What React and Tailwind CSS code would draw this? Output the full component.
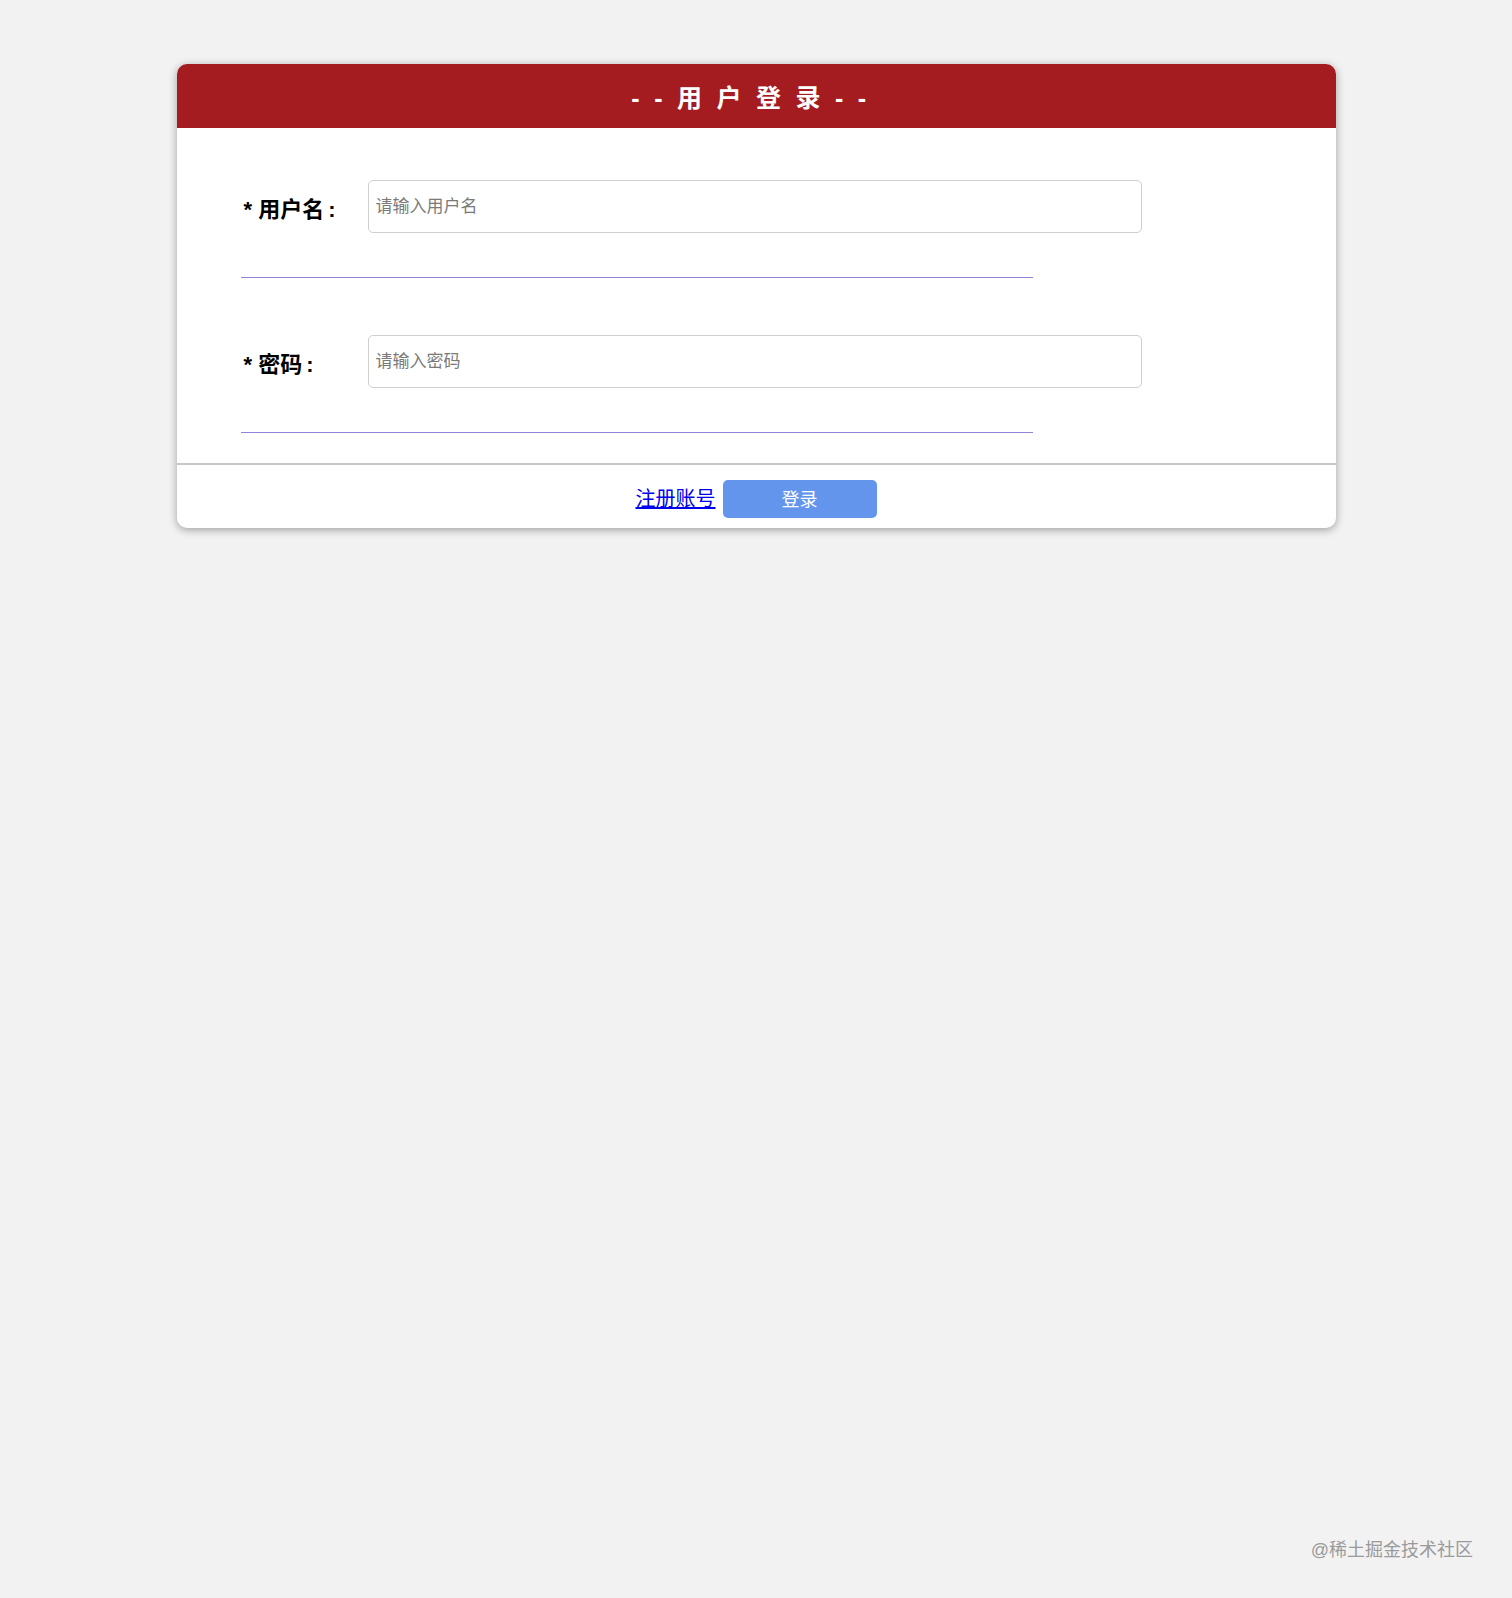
import React from "react";

const FONT = { fontFamily: '"Liberation Sans", "Noto Sans CJK SC", sans-serif' };

function Field({ label, placeholder, type = "text" }) {
  return (
    <div>
      <div className="flex items-center">
        <label className="w-[127px] shrink-0 pt-[6px] pl-[3px] text-[22px] font-bold text-black">
          * {label}<span className="ml-[4px]">:</span>
        </label>
        <input
          type={type}
          placeholder={placeholder}
          className="w-[774px] h-[53px] rounded-[5px] border border-[#cfcfcf] bg-white px-[7px] text-[17px] outline-none placeholder:text-[#7a7a7a]"
        />
      </div>
      <div className="mt-[44px] w-[792px] h-px bg-[#8f84dc]" />
    </div>
  );
}

export default function App() {
  return (
    <div className="relative min-h-[1598px] bg-[#f2f2f2] pt-[64px]" style={FONT}>
      <div className="mx-auto w-[1159px] rounded-[10px] bg-white shadow-[0_2px_8px_rgba(0,0,0,0.35)]">
        {/* header */}
        <div className="h-[64px] pt-[4px] rounded-t-[10px] bg-[#a41c1f] flex items-center justify-center">
          <h1 className="text-[25px] font-bold text-white tracking-[14.5px] leading-none">
            --用户登录--
          </h1>
        </div>

        {/* form body */}
        <div className="pl-[64px] pt-[52px] pb-[30px] space-y-[57px]">
          <Field label="用户名" placeholder="请输入用户名" />
          <Field label="密码" placeholder="请输入密码" type="password" />
        </div>

        {/* footer */}
        <div className="border-t-2 border-[#c6c6c6] h-[65px] pt-[4px] flex items-center justify-center gap-[7px]">
          <a href="#" className="text-[20px] text-[#0000ee] underline">
            注册账号
          </a>
          <button className="w-[154px] h-[38px] pt-[3px] rounded-[5px] bg-[#6495ed] text-white text-[18px]">
            登录
          </button>
        </div>
      </div>

      <div className="absolute right-[39px] bottom-[34px] text-[18px] text-[#9a9a9a]">
        @稀土掘金技术社区
      </div>
    </div>
  );
}
